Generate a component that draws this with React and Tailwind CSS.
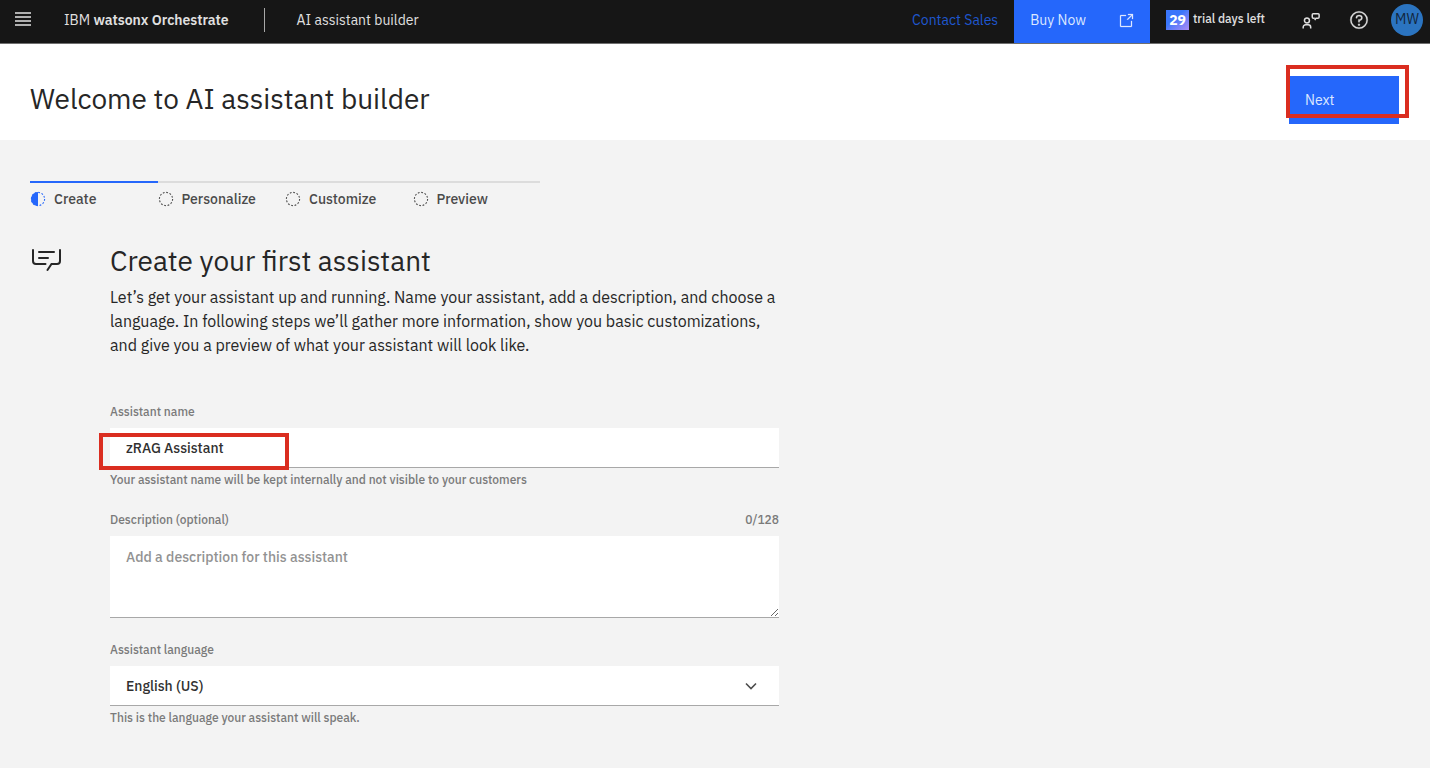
import React, { useState } from "react";

const MENU_LINES = [1, 5, 9, 13];

function MenuIcon() {
  return (
    <svg className="h-4 w-4" viewBox="0 0 16 16" stroke="#b0b0b0" strokeWidth="2" aria-hidden="true">
      {MENU_LINES.map((y) => (
        <line key={y} x1="0" x2="16" y1={y} y2={y} />
      ))}
    </svg>
  );
}

function LaunchIcon() {
  return (
    <svg className="h-4 w-4" viewBox="0 0 32 32" fill="currentColor" stroke="currentColor" strokeWidth="0.5" aria-hidden="true">
      <path d="M26 28H6a2 2 0 0 1-2-2V6a2 2 0 0 1 2-2h10v2H6v20h20V16h2v10a2 2 0 0 1-2 2Z" />
      <path d="M20 2v2h6.586L18 12.586 19.414 14 28 5.414V12h2V2H20Z" />
    </svg>
  );
}

function FeedbackIcon() {
  return (
    <svg className="h-5 w-5" viewBox="0 0 32 32" fill="none" stroke="currentColor" strokeWidth="2.400" aria-hidden="true">
      <circle cx="9.500" cy="15" r="4" />
      <path d="M3.500 28v-2a4 4 0 0 1 4-4h4a4 4 0 0 1 4 4v2" />
      <path d="M22 14.500l2-3h3a2 2 0 0 0 2-2V6a1.500 1.500 0 0 0-1.500-1.500h-8A1.500 1.500 0 0 0 18 6v3.500a2 2 0 0 0 2 2h2" />
    </svg>
  );
}

function HelpIcon() {
  return (
    <svg className="h-5 w-5" viewBox="0 0 32 32" fill="currentColor" stroke="currentColor" strokeWidth="0.5" aria-hidden="true">
      <path d="M16 2a14 14 0 1 0 14 14A14 14 0 0 0 16 2Zm0 26a12 12 0 1 1 12-12 12 12 0 0 1-12 12Z" />
      <circle cx="16" cy="23.500" r="1.500" />
      <path d="M17 8h-1.500A4.490 4.490 0 0 0 11 12.500v.5h2v-.5a2.500 2.500 0 0 1 2.500-2.500H17a2.500 2.500 0 0 1 0 5h-2v4.500h2V17a4.500 4.500 0 0 0 0-9Z" />
    </svg>
  );
}

function StepIcon({ current }) {
  return (
    <svg className="h-4 w-4 shrink-0" viewBox="0 0 16 16" fill="none" aria-hidden="true">
      <circle
        cx="8"
        cy="8"
        r="6.600"
        stroke={current ? "#2567fb" : "#4d4d4d"}
        strokeWidth="1.100"
        strokeDasharray="1.800 1.656"
      />
      {current && <path d="M8 1a7 7 0 0 0 0 14Z" fill="#2567fb" />}
    </svg>
  );
}

function ChatIcon() {
  return (
    <svg
      className="h-8 w-8"
      viewBox="0 0 32 32"
      fill="none"
      stroke="#262626"
      strokeWidth="2"
      strokeLinecap="round"
      aria-hidden="true"
    >
      <path d="M3 7v11a3 3 0 0 0 3 3h9.500" />
      <path d="M30 7v11a3 3 0 0 1-3 3h-5.500l-4 6" />
      <path d="M9 9h15M9 15h9" />
    </svg>
  );
}

function Marker({ className }) {
  return <span aria-hidden="true" className={"pointer-events-none absolute border-4 border-[#da2d20] " + className} />;
}

const STEPS = ["Create", "Personalize", "Customize", "Preview"];

function TopBar() {
  return (
    <header className="flex h-11 items-center border-b border-[#6f6f6f] bg-[#161616] text-[14px] text-[#e0e0e0]">
      <button type="button" aria-label="Menu" className="pb-1 pl-[15px]">
        <MenuIcon />
      </button>
      <a href="#home" className="ml-[33px] pb-0.5 whitespace-nowrap">
        IBM <span className="font-semibold">watsonx Orchestrate</span>
      </a>
      <span className="mb-1 ml-[35px] h-6 w-px bg-[#a8a8a8]" />
      <span className="ml-8 pb-0.5 whitespace-nowrap">AI assistant builder</span>
      <div className="ml-auto flex h-full items-center whitespace-nowrap">
        <a href="#sales" className="mr-4 pb-0.5 text-[#1f56cf]">
          Contact Sales
        </a>
        <button type="button" className="flex h-full w-[136px] items-center justify-between bg-[#2567fb] px-4 pb-0.5 text-[#dde8ff]">
          Buy Now
          <LaunchIcon />
        </button>
        <p className="ml-4 flex items-center gap-1 pb-1">
          <span className="bg-linear-to-br from-[#3a76fb] from-40% to-[#a98af5] px-[3px] text-[14px] leading-5 font-bold text-white">29</span>
          <span className="pb-0.5 text-[12px] font-medium">trial days left</span>
        </p>
        <button type="button" aria-label="Feedback" className="ml-9 pb-0.5">
          <FeedbackIcon />
        </button>
        <button type="button" aria-label="Help" className="ml-7 pb-1">
          <HelpIcon />
        </button>
        <button type="button" aria-label="Account" className="mr-[7px] mb-1 ml-[22px] h-8 w-8 rounded-full bg-[#2b74c0] text-[14px] text-[#12263c]">
          MW
        </button>
      </div>
    </header>
  );
}

function Progress() {
  return (
    <ol className="flex max-w-[510px]">
      {STEPS.map((step, i) => (
        <li
          key={step}
          aria-current={i === 0 ? "step" : undefined}
          className={
            "flex flex-1 items-center gap-2 border-t-2 pt-2 text-[14px] leading-4 font-medium text-[#4a4a4a] " +
            (i === 0 ? "border-[#2567fb]" : "border-[#dcdcdc]")
          }
        >
          <StepIcon current={i === 0} />
          {step}
        </li>
      ))}
    </ol>
  );
}

export default function App() {
  const [name, setName] = useState("zRAG Assistant");
  const [description, setDescription] = useState("");

  return (
    <div className="min-h-screen bg-[#f3f3f3] font-['IBM_Plex_Sans','Noto_Sans',sans-serif] text-[#262626]">
      <TopBar />
      <div className="flex items-center justify-between bg-white pt-8 pr-[31px] pb-4 pl-[30px]">
        <h1 className="mb-0.5 text-[28px] leading-9">Welcome to AI assistant builder</h1>
        <div className="relative">
          <button type="button" className="block h-12 w-[110px] bg-[#2567fb] px-4 text-left text-[14px] text-[#dde8ff]">
            Next
          </button>
          <Marker className="-top-[11px] -left-[3px] h-[53px] w-[123px]" />
        </div>
      </div>
      <main className="px-[30px] pt-[41px] pb-10">
        <Progress />
        <div className="mt-9 flex gap-12">
          <ChatIcon />
          <section className="max-w-[669px] flex-1">
            <h2 className="text-[28px] leading-9">Create your first assistant</h2>
            <p className="mt-[6px] text-[16px] leading-6">
              Let’s get your assistant up and running. Name your assistant, add a description, and choose a language. In
              following steps we’ll gather more information, show you basic customizations, and give you a preview of what
              your assistant will look like.
            </p>
            <form className="mt-[47px] flex flex-col gap-6 text-[12px] leading-4 font-medium text-[#7a7a7a]">
              <div>
                <label htmlFor="name">Assistant name</label>
                <div className="relative mt-2">
                  <input
                    id="name"
                    value={name}
                    onChange={(e) => setName(e.target.value)}
                    className="block h-10 w-full border-b border-[#a8a8a8] bg-white px-4 text-[14px] text-[#303030] outline-none"
                  />
                  <Marker className="top-[5px] -left-[11px] h-[37px] w-[190px]" />
                </div>
                <p className="mt-1">Your assistant name will be kept internally and not visible to your customers</p>
              </div>
              <div>
                <div className="flex justify-between">
                  <label htmlFor="description">Description (optional)</label>
                  <span>{description.length}/128</span>
                </div>
                <textarea
                  id="description"
                  maxLength={128}
                  placeholder="Add a description for this assistant"
                  value={description}
                  onChange={(e) => setDescription(e.target.value)}
                  className="mt-2 block h-[82px] w-full border-b border-[#a8a8a8] bg-white px-4 py-3 text-[14px] leading-[18px] text-[#303030] outline-none placeholder:text-[#929292]"
                />
              </div>
              <div>
                <label htmlFor="language">Assistant language</label>
                <div className="mt-2 grid items-center">
                  <select
                    id="language"
                    className="col-start-1 row-start-1 h-10 w-full appearance-none border-b border-[#a8a8a8] bg-white px-4 text-[14px] text-[#303030] outline-none"
                  >
                    <option>English (US)</option>
                  </select>
                  <svg
                    className="pointer-events-none col-start-1 row-start-1 mr-5 h-4 w-4 justify-self-end"
                    viewBox="0 0 16 16"
                    fill="none"
                    stroke="#4d4d4d"
                    strokeWidth="1.600"
                    aria-hidden="true"
                  >
                    <path d="M3 5.500l5 5 5-5" />
                  </svg>
                </div>
                <p className="mt-1">This is the language your assistant will speak.</p>
              </div>
            </form>
          </section>
        </div>
      </main>
    </div>
  );
}
